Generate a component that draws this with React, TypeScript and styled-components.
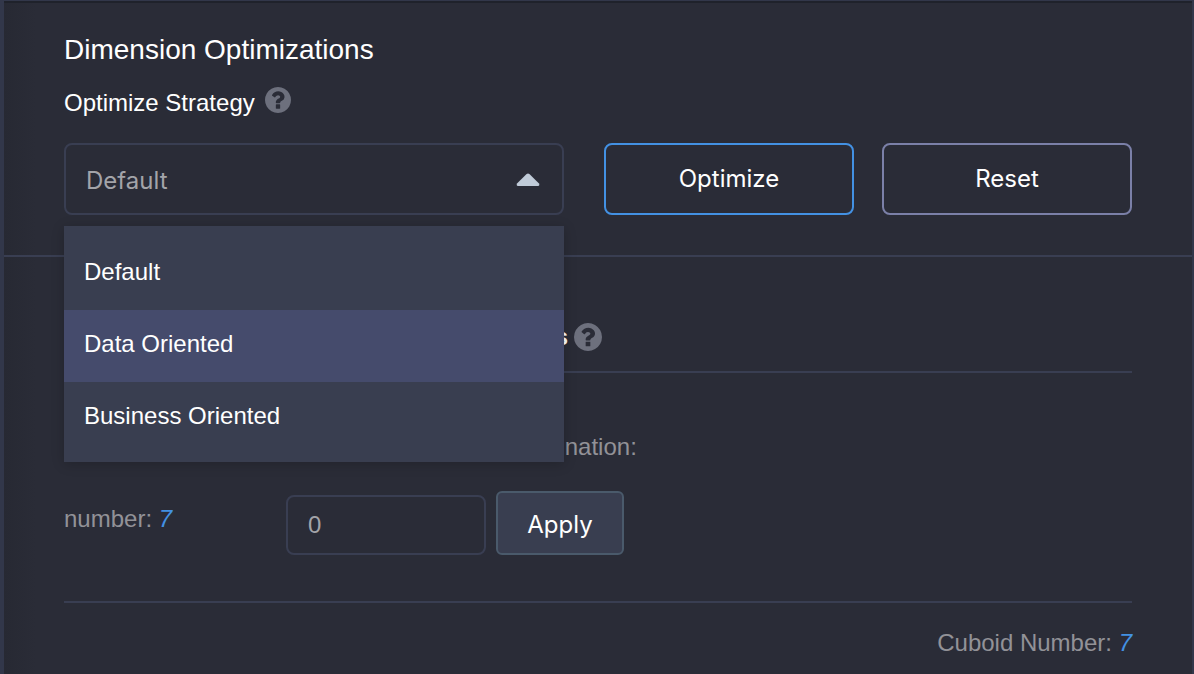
import React, { useState } from "react";
import styled, { createGlobalStyle } from "styled-components";

const sans = '"Liberation Sans", Arial, sans-serif';
const control = 'Inter, "Liberation Sans", sans-serif';

const GlobalStyle = createGlobalStyle`
  *, *::before, *::after { box-sizing: border-box; }
  body {
    margin: 0;
    background: #2a2c37;
    color: #ffffff;
    font-family: ${sans};
    font-size: 24px;
    line-height: 32px;
  }
`;

const Panel = styled.main`
  min-height: 100vh;
  border: solid #32374a;
  border-width: 1px 2px 0 4px;
  background: linear-gradient(to right, #272933, #2a2c37 32px);
  box-shadow: inset 0 2px 0 #1f222b;
`;

const Strategy = styled.section`
  padding: 32px 60px 40px;
  border-bottom: 2px solid #393e52;
`;

const Heading = styled.h1`
  margin: 0 0 20px;
  font-size: 28px;
  font-weight: 400;
  line-height: 34px;
`;

const LabelLine = styled.div`
  display: flex;
  align-items: flex-start;
  gap: 10px;
  margin-bottom: 24px;
`;

const ControlRow = styled.div`
  display: flex;
  gap: 40px;
`;

const SelectBox = styled.div`
  position: relative;
  flex: 500 1 0;
`;

const Select = styled.select`
  display: block;
  width: 100%;
  height: 72px;
  padding: 2px 60px 0 20px;
  appearance: none;
  background: transparent;
  border: 2px solid #393e52;
  border-radius: 8px;
  outline: none;
  color: #a3a4a9;
  font: 24px ${control};
`;

const Caret = styled.svg`
  position: absolute;
  right: 24px;
  top: 30px;
  pointer-events: none;
`;

const Menu = styled.ul`
  position: absolute;
  top: 83px;
  left: 0;
  right: 0;
  z-index: 1;
  margin: 0;
  padding: 12px 0 8px;
  list-style: none;
  background: #393e50;
  box-shadow: 0 2px 12px rgba(0, 0, 0, 0.2);
`;

const MenuItem = styled.li<{ $active: boolean }>`
  height: 72px;
  padding: 0 20px;
  line-height: 68px;
  cursor: pointer;
  background: ${(p) => (p.$active ? "#454b6c" : "transparent")};
`;

const ButtonGroup = styled.div`
  display: flex;
  flex: 528 1 0;
  gap: 28px;
`;

const Button = styled.button<{ $tone: "primary" | "plain" }>`
  flex: 1 1 0;
  height: 72px;
  padding: 0 0 2px;
  border: 2px solid ${(p) => (p.$tone === "primary" ? "#4391e3" : "#7b80a8")};
  border-radius: 8px;
  background: transparent;
  color: #ffffff;
  font: 24px ${control};
`;

const Groups = styled.section`
  padding: 64px 60px 12px;
`;

const GroupHeader = styled.div`
  display: flex;
  align-items: center;
  gap: 6px;
  padding-bottom: 18px;
  border-bottom: 2px solid #393e52;
`;

const GroupTitle = styled.h2`
  margin: 0;
  font-size: 24px;
  font-weight: 700;
`;

const GroupBody = styled.div`
  display: flex;
  padding: 38px 0 46px;
  border-bottom: 2px solid #393e52;
  color: #929297;
`;

const Total = styled.p`
  flex: none;
  width: 222px;
  margin: 0;
  line-height: 72px;
`;

const Count = styled.em`
  color: #4391e3;
`;

const Field = styled.div`
  display: flex;
  flex-direction: column;
  gap: 8px;
`;

const FieldLabel = styled.label`
  line-height: 72px;
`;

const FieldRow = styled.div`
  display: flex;
  align-items: flex-end;
  gap: 10px;
`;

const NumberInput = styled.input`
  width: 200px;
  height: 60px;
  padding: 0 20px;
  border: 2px solid #393e52;
  border-radius: 8px;
  outline: none;
  background: transparent;
  color: #a3a4a9;
  font: 24px ${sans};
`;

const ApplyButton = styled.button`
  width: 128px;
  height: 64px;
  padding: 2px 0 0;
  border: 2px solid #4a5a6b;
  border-radius: 6px;
  background: #393e50;
  color: #ffffff;
  font: 24px ${control};
`;

const Footer = styled.p`
  margin: 24px 0 0;
  text-align: right;
  color: #929297;
`;

function HelpIcon({ size }: { size: number }) {
  return (
    <svg width={size} height={size} viewBox="0 128 1536 1536" fill="#6d707d" aria-hidden="true">
      <path d="M896 1376v-192q0-14-9-23t-23-9h-192q-14 0-23 9t-9 23v192q0 14 9 23t23 9h192q14 0 23-9t9-23zm256-672q0-88-55.5-163t-138.5-116-170-41q-243 0-371 213-15 24 8 42l132 100q7 6 19 6 16 0 25-12 53-68 86-92 34-24 86-24 48 0 85.5 26t37.5 59q0 38-20 61t-68 45q-63 28-115.5 86.5t-52.5 125.5v36q0 14 9 23t23 9h192q14 0 23-9t9-23q0-19 21.5-49.5t54.5-49.5q32-18 49-28.5t46-35 44.5-48 28-60.5 12.5-81zm384 192q0 209-103 385.5t-279.5 279.5-385.5 103-385.5-103-279.5-279.5-103-385.5 103-385.5 279.5-279.5 385.5-103 385.5 103 279.5 279.5 103 385.5z" />
    </svg>
  );
}

const options = ["Default", "Data Oriented", "Business Oriented"];

export default function App() {
  const [strategy, setStrategy] = useState("Default");
  const [hovered, setHovered] = useState("Data Oriented");
  const [open, setOpen] = useState(true);
  const [limit, setLimit] = useState("0");

  const choose = (option: string) => {
    setStrategy(option);
    setOpen(false);
  };

  return (
    <>
      <GlobalStyle />
      <Panel>
        <Strategy>
          <Heading>Dimension Optimizations</Heading>
          <LabelLine>
            <label htmlFor="strategy">Optimize Strategy</label>
            <HelpIcon size={26} />
          </LabelLine>
          <ControlRow>
            <SelectBox>
              <Select
                id="strategy"
                value={strategy}
                onChange={(e) => setStrategy(e.target.value)}
                onMouseDown={(e) => {
                  e.preventDefault();
                  setOpen(!open);
                }}
              >
                {options.map((option) => (
                  <option key={option}>{option}</option>
                ))}
              </Select>
              <Caret width="24" height="14" viewBox="0 0 24 14" aria-hidden="true">
                <path d="M10.6 1.1Q12 0 13.4 1.1L23 10.6Q24 13 22 13H2Q0 13 1 10.6Z" fill="#c0cbd8" />
              </Caret>
              {open && (
                <Menu role="listbox" aria-label="Optimize Strategy">
                  {options.map((option) => (
                    <MenuItem
                      key={option}
                      role="option"
                      aria-selected={option === strategy}
                      $active={option === hovered}
                      onMouseEnter={() => setHovered(option)}
                      onClick={() => choose(option)}
                    >
                      {option}
                    </MenuItem>
                  ))}
                </Menu>
              )}
            </SelectBox>
            <ButtonGroup>
              <Button type="button" $tone="primary">Optimize</Button>
              <Button type="button" $tone="plain">Reset</Button>
            </ButtonGroup>
          </ControlRow>
        </Strategy>
        <Groups>
          <GroupHeader>
            <GroupTitle>Aggregation Groups for Cuboid Dimensions</GroupTitle>
            <HelpIcon size={28} />
          </GroupHeader>
          <GroupBody>
            <Total>
              Total Cuboid number: <Count>7</Count>
            </Total>
            <Field>
              <FieldLabel htmlFor="limit">Max Dimensions in Combination:</FieldLabel>
              <FieldRow>
                <NumberInput
                  id="limit"
                  type="text"
                  inputMode="numeric"
                  value={limit}
                  onChange={(e) => setLimit(e.target.value)}
                />
                <ApplyButton type="button">Apply</ApplyButton>
              </FieldRow>
            </Field>
          </GroupBody>
          <Footer>
            Cuboid Number: <Count>7</Count>
          </Footer>
        </Groups>
      </Panel>
    </>
  );
}
